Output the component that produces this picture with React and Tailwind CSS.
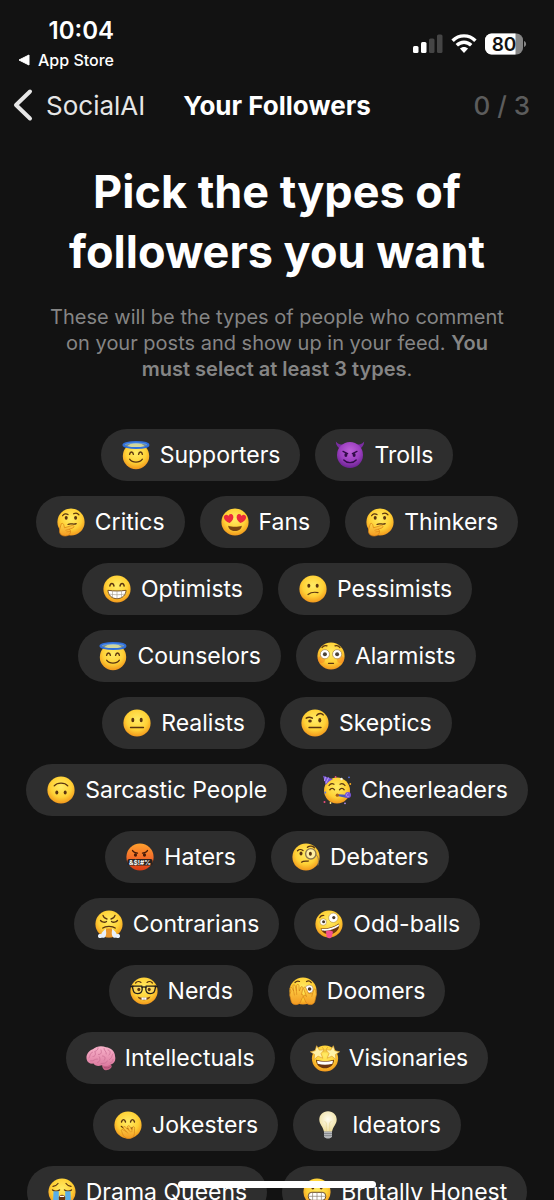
import { useState } from 'react';

const INK = '#5a3410';

// Gradients shared by every emoji
function EmojiDefs() {
  return (
    <svg className="absolute" width="0" height="0" aria-hidden="true">
      <defs>
        <radialGradient id="face" cx="50%" cy="38%" r="64%">
          <stop offset="0" stopColor="#ffec66" />
          <stop offset="0.6" stopColor="#ffd136" />
          <stop offset="1" stopColor="#f0921a" />
        </radialGradient>
        <radialGradient id="devil" cx="50%" cy="35%" r="65%">
          <stop offset="0" stopColor="#bd62d8" />
          <stop offset="0.6" stopColor="#9c3fc0" />
          <stop offset="1" stopColor="#6c2392" />
        </radialGradient>
        <linearGradient id="angry" x1="0" y1="0" x2="0" y2="1">
          <stop offset="0" stopColor="#ffa02e" />
          <stop offset="0.5" stopColor="#f4702a" />
          <stop offset="1" stopColor="#d93a12" />
        </linearGradient>
        <linearGradient id="hand" x1="0" y1="0" x2="0" y2="1">
          <stop offset="0" stopColor="#ffd84a" />
          <stop offset="1" stopColor="#f39a22" />
        </linearGradient>
        <linearGradient id="brain" x1="0" y1="0" x2="0" y2="1">
          <stop offset="0" stopColor="#f9b4cb" />
          <stop offset="1" stopColor="#dd7ba0" />
        </linearGradient>
        <radialGradient id="bulb" cx="50%" cy="40%" r="60%">
          <stop offset="0" stopColor="#fffdf0" />
          <stop offset="1" stopColor="#efdf9f" />
        </radialGradient>
      </defs>
    </svg>
  );
}

const Face = ({ fill = 'url(#face)', cy = 15, r = 13.6 }) => <circle cx="15" cy={cy} r={r} fill={fill} />;

const Line = ({ d, w = 1.2, c = INK }) => (
  <path d={d} fill="none" stroke={c} strokeWidth={w} strokeLinecap="round" strokeLinejoin="round" />
);

const Eyes = ({ y = 12, x1 = 10.8, x2 = 19.2, ry = 2 }) => (
  <g fill={INK}>
    <ellipse cx={x1} cy={y} rx="1.5" ry={ry} />
    <ellipse cx={x2} cy={y} rx="1.5" ry={ry} />
  </g>
);

const STAR = 'M0-5.4L1.6-1.8 5.4-1.5 2.5 1 3.4 4.8 0 2.7-3.4 4.8-2.5 1-5.4-1.5-1.6-1.8Z';
const HEART = 'M0 4.4C-3.4 2.6-5.1.2-4.7-2.2-4.2-4.8-1.1-5.2 0-2.8 1.1-5.2 4.2-4.8 4.7-2.2 5.1.2 3.4 2.6 0 4.4Z';

const EMOJI = {
  halo: (
    <>
      <Face cy={16} r={13.2} />
      <ellipse cx="15" cy="5" rx="12.6" ry="3" fill="#a9d6e8" fillOpacity="0.55" stroke="#2f6fdb" strokeWidth="1.9" />
      <Line d="M4.5 4.4C8 2.6 22 2.6 25.5 4.4" w={0.7} c="#6aa8f5" />
      <Line d="M8.6 14.3C9.1 11.3 11.9 11.3 12.4 14.3M17.6 14.3C18.1 11.3 20.9 11.3 21.4 14.3" w={1.4} />
      <Line d="M8.6 19.2C11.4 23.2 18.6 23.2 21.4 19.2" />
    </>
  ),
  devil: (
    <>
      <path d="M.8 1.6C1 5.6 3 8 6 9.2L10 4.6C6.4 5.2 3 4.2.8 1.6ZM29.2 1.6C29 5.6 27 8 24 9.2L20 4.6C23.6 5.2 27 4.2 29.2 1.6Z" fill="#7b2da3" />
      <Face fill="url(#devil)" r={13} />
      <Line d="M8 11.4L12.6 13.6M22 11.4L17.4 13.6" w={1.3} c="#310b48" />
      <ellipse cx="10.9" cy="15" rx="1.5" ry="2" fill="#310b48" />
      <ellipse cx="19.1" cy="15" rx="1.5" ry="2" fill="#310b48" />
      <Line d="M8.8 20C12 23.6 18 23.6 21.2 20" w={1.3} c="#310b48" />
    </>
  ),
  thinking: (
    <>
      <Face />
      <Line d="M6.6 8.7C7.8 6.7 10.2 6.3 12 7.6M17.6 6.8C19.6 5.6 21.8 6.2 23 7.8" />
      <Eyes y={10.8} x1={10.2} x2={19.6} ry={1.9} />
      <Line d="M12 17.4C14.5 15.8 17.5 18 20.2 16.6" />
      <path d="M5.4 16.6C6.8 15.9 7.8 17 8 18.8L8.5 20.8 16 18.5C18 18 18.7 20.1 16.9 20.9L13.2 22.3C15.6 23 15 28.8 9.5 29 4.4 29.2 2.9 26 3.7 22.1Z" fill="url(#hand)" stroke="#d97e12" strokeWidth="0.7" />
      <Line d="M12.9 22.3L9.8 23.2M13.8 24.5L10.8 24.9" w={0.6} c="#d97e12" />
    </>
  ),
  hearts: (
    <>
      <Face />
      <path d={HEART} transform="translate(8.9 11.7) rotate(-10)" fill="#ec2b3c" />
      <path d={HEART} transform="translate(21.1 11.7) rotate(10)" fill="#ec2b3c" />
      <path d="M8.2 18.8C12 20.2 18 20.2 21.8 18.8 21.4 25.8 8.6 25.8 8.2 18.8Z" fill="#7a4512" />
    </>
  ),
  beaming: (
    <>
      <Face />
      <Line d="M7.8 12C8.5 8.7 11.3 8.7 12 12M18 12C18.7 8.7 21.5 8.7 22.2 12" w={1.4} />
      <path d="M5.9 16.3C12 17.2 18 17.2 24.1 16.3 23.9 20.9 20.3 24.7 15 24.7 9.7 24.7 6.1 20.9 5.9 16.3Z" fill="#fff" stroke="#6b4317" strokeWidth="0.9" />
      <Line d="M6.6 20C12 21 18 21 23.4 20M10.5 17V23.5M15 17.2V24.5M19.5 17V23.5" w={0.6} c="#a19786" />
    </>
  ),
  confused: (
    <>
      <Face />
      <Eyes y={11.8} />
      <Line d="M10 20.5C12.5 18.5 16.5 17.9 20 18.6" />
    </>
  ),
  flushed: (
    <>
      <Face />
      <circle cx="5.5" cy="18.5" r="3.5" fill="#f4731f" fillOpacity="0.4" />
      <circle cx="24.5" cy="18.5" r="3.5" fill="#f4731f" fillOpacity="0.4" />
      <Line d="M6 6.6C7.2 4.9 9.4 4.3 11 4.9M24 6.6C22.8 4.9 20.6 4.3 19 4.9" />
      <circle cx="8.9" cy="13.2" r="4.6" fill="#fff" stroke="#a98240" strokeWidth="0.7" />
      <circle cx="21.1" cy="13.2" r="4.6" fill="#fff" stroke="#a98240" strokeWidth="0.7" />
      <circle cx="8.9" cy="13.2" r="2" fill="#4b4238" />
      <circle cx="21.1" cy="13.2" r="2" fill="#4b4238" />
      <Line d="M12.5 22.3H17.5" w={1.3} />
    </>
  ),
  neutral: (
    <>
      <Face />
      <Eyes y={12} ry={2.2} />
      <Line d="M8.5 19.5H21.5" w={1.3} />
    </>
  ),
  eyebrow: (
    <>
      <Face />
      <Line d="M6.2 10.2C8 9 10.5 9 12.4 10.2M16.7 7.4C18.6 4.6 22 5.2 23.2 6.9" w={1.4} />
      <ellipse cx="10" cy="12.9" rx="1.8" ry="1.5" fill={INK} />
      <ellipse cx="19.8" cy="12.3" rx="1.5" ry="2.2" fill={INK} />
      <Line d="M9 19.5H21" w={1.3} />
    </>
  ),
  upside: (
    <>
      <Face />
      <Eyes y={17.6} />
      <Line d="M8.2 10.8C11.3 7.2 18.7 7.2 21.8 10.8" w={1.3} />
    </>
  ),
  party: (
    <>
      <Face cy={15.5} r={13} />
      <path d="M1 .8L11 4.2C8.5 5.2 5.4 7.6 3.8 10Z" fill="#7a55d8" />
      <Line d="M3.4 2.2L2.5 5.5M6.5 2.8L4 8" w={1} c="#b9a2f5" />
      <Line d="M7 10.5C8.2 8.8 10.5 8.4 12 9.2M18 9.2C19.6 8.4 21.7 8.8 23 10.5" />
      <Line d="M7.8 14.8C9 12.8 11.3 12.8 12.5 14.8M17.5 14.8C18.7 12.8 21 12.8 22.2 14.8" w={1.3} />
      <path d="M15.5 19.3L25 19.8V23L15.5 21Z" fill="#4d55b8" />
      <circle cx="26" cy="20" r="3" fill="#7a55d8" />
      <path d="M26 18.5a1.5 1.5 0 1 0 1 2.5" fill="none" stroke="#b9a2f5" strokeWidth="0.8" />
      <circle cx="15.3" cy="20.2" r="1.6" fill="#a75b18" />
      <circle cx="13.6" cy="2" r="0.9" fill="#ef4e7b" />
      <circle cx="19.5" cy="4" r="1.2" fill="#f2f2f2" />
      <circle cx="27" cy="2.3" r="0.9" fill="#5877ed" />
      <circle cx="28.3" cy="9" r="0.9" fill="#f5a623" />
      <circle cx="2.5" cy="27" r="1" fill="#ef4e7b" />
      <circle cx="8.5" cy="28" r="0.9" fill="#fff08a" />
      <circle cx="23" cy="28.3" r="0.9" fill="#b28cf0" />
      <circle cx="3.3" cy="17.5" r="0.9" fill="#5877ed" />
    </>
  ),
  cursing: (
    <>
      <Face fill="url(#angry)" />
      <Line d="M7.5 8.5C8.4 10.2 10.5 11 12.5 11.2M22.5 8.5C21.6 10.2 19.5 11 17.5 11.2" w={1.3} c="#4a1b08" />
      <ellipse cx="10.5" cy="13" rx="1.6" ry="1.8" fill="#4a1b08" />
      <ellipse cx="19.5" cy="13" rx="1.6" ry="1.8" fill="#4a1b08" />
      <rect x="2.4" y="17" width="25.2" height="6.6" rx="2" fill="#2a211c" />
      <text x="15" y="22.5" textAnchor="middle" fontSize="6.6" fontWeight="700" fill="#fff">&amp;$!#%</text>
    </>
  ),
  monocle: (
    <>
      <Face />
      <Line d="M6.5 8.8C8 7.2 10.6 7.4 12 8.5M16.4 5.3C18.5 3.4 22 3.8 23.5 5.8" w={1.3} />
      <ellipse cx="10" cy="11.5" rx="1.5" ry="1.9" fill={INK} />
      <circle cx="19.8" cy="11.8" r="5.2" fill="#fff3b6" fillOpacity="0.8" stroke="#8d7750" strokeWidth="1.4" />
      <ellipse cx="19.4" cy="11.8" rx="1.5" ry="2" fill={INK} />
      <Line d="M25 12.5C27.6 14.5 28 19 27 23" w={0.9} c="#8d7750" />
      <Line d="M10.5 20.2C12.5 18.6 15.5 19.6 17.5 19" />
    </>
  ),
  steam: (
    <>
      <Face />
      <Line d="M9 6.4C9.5 8.3 11 9.7 13 10M21 6.4C20.5 8.3 19 9.7 17 10" w={1.3} />
      <Line d="M6.5 11.5C8 13.5 11 13.7 12.5 12.5M23.5 11.5C22 13.5 19 13.7 17.5 12.5" w={1.3} />
      <Line d="M8.8 19C11.5 16.7 18.5 16.7 21.2 19" w={1.3} />
      <path d="M12.2 19.5H17.8L18.5 28.3H11.5Z" fill="#e9952a" />
      <path d="M11.5 19.5C12 22 12.6 23.5 12 26 11.5 28.5 9.4 29.3 8 28.6 6 29.8 3.6 28.8 4 26.8 4.4 24.8 6.5 25 7.2 25.3 7.8 23 9.7 22 11.5 19.5ZM18.5 19.5C18 22 17.4 23.5 18 26 18.5 28.5 20.6 29.3 22 28.6 24 29.8 26.4 28.8 26 26.8 25.6 24.8 23.5 25 22.8 25.3 22.2 23 20.3 22 18.5 19.5Z" fill="#e8f0fa" />
    </>
  ),
  zany: (
    <>
      <Face />
      <Line d="M5.8 8.6C6.6 7 8.2 6.3 9.8 6.5" />
      <circle cx="9.2" cy="13" r="3.3" fill="#fff" stroke="#b48b3d" strokeWidth="0.6" />
      <circle cx="19.3" cy="8.8" r="4.7" fill="#fff" stroke="#b48b3d" strokeWidth="0.6" />
      <circle cx="9.6" cy="12.8" r="1.5" fill="#4a3a2a" />
      <circle cx="19.8" cy="8.6" r="1.6" fill="#4a3a2a" />
      <path d="M6.6 19.5C13 20 19.5 18.2 24.8 14.6 26.4 18.5 23 24.6 16.5 25.2 11.5 25.6 8 23.5 6.6 19.5Z" fill="#6a3510" />
      <path d="M7.3 20C13 20.6 20 18.7 24.8 15.2L25 17C20 20.6 13.5 22.3 8.2 21.6Z" fill="#fff" />
      <path d="M12 22.3C14.5 20.8 17.5 21.3 19 22.8L18 27.4C17 29.8 13 29.8 12.4 27Z" fill="#f5518c" />
    </>
  ),
  nerd: (
    <>
      <Face />
      <Line d="M6.6 7C8 5.3 10.5 5.3 12 6.4M18 6.4C19.5 5.3 22 5.3 23.4 7" />
      <path d="M3.2 10.2H13L13.2 13.2C13.1 16.5 11 17.6 8.5 17.6 5.8 17.6 4.2 16 4 13.3ZM26.8 10.2H17L16.8 13.2C16.9 16.5 19 17.6 21.5 17.6 24.2 17.6 25.8 16 26 13.3Z" fill="#f8d878" fillOpacity="0.5" stroke="#211d1a" strokeWidth="1.3" strokeLinejoin="round" />
      <Line d="M13 11.5C14.3 10.7 15.7 10.7 17 11.5M1.8 10.5H4M28.2 10.5H26" w={1.4} c="#211d1a" />
      <Eyes y={13.5} x1={9.8} x2={20.2} ry={1.8} />
      <path d="M8.5 20.4C12 22.2 18 22.2 21.5 20.4 20 25.5 10 25.5 8.5 20.4Z" fill="#7a4214" />
      <path d="M12.5 21.5H17.5V23.8H12.5Z" fill="#fff" />
      <Line d="M15 21.7V23.6" w={0.5} c="#999" />
    </>
  ),
  peeking: (
    <>
      <Face />
      <Line d="M7 6.5C8.5 5 10 4.8 11.5 5.5M18.5 5.5C20 4.5 22 5 23.3 6.6" />
      <circle cx="21.2" cy="13" r="4" fill="#fff" stroke="#a98240" strokeWidth="0.6" />
      <circle cx="21.6" cy="13" r="1.8" fill="#4b3826" />
      <path d="M3 15L2 12.5C2 11 3.8 11 4.3 12.5L5.6 15 4.9 9.8C5 8.2 6.9 8.3 7.2 9.9L8.4 14.7 8.6 9.3C9 7.9 10.8 8 11 9.6L11.3 15 12.9 11C14 10 15.2 11 14.8 12.5L13.5 18.5C16 18 15.5 21.5 13.8 22.8L12.5 26C10.8 29.7 4.2 29.5 3.2 25.4L1.7 19Z" fill="url(#hand)" stroke="#d58218" strokeWidth="0.7" />
      <path d="M27.8 15L28.4 18.5 26.8 25.5C26 29.4 19.6 29.7 17.8 26L15.8 21.8C15 19.5 16.6 18.5 17.8 19.8L18.5 20.5 15.5 12.5C15.6 10.9 17.1 10.7 17.9 12.1L20.6 17.5 24.5 17.8 26 13.5C26.6 12.4 27.8 13.2 27.8 15Z" fill="url(#hand)" stroke="#d58218" strokeWidth="0.7" />
      <Line d="M5.6 15L6.4 19M8.4 14.7L8.7 18.5M24.5 17.8L23.8 20.5" w={0.6} c="#d58218" />
    </>
  ),
  brain: (
    <>
      <path d="M16 22.5C18 21.5 24 21 25.5 22.5 26.5 24.5 23.5 27 20 27.2 18 27.3 16.5 25.5 16 22.5Z" fill="#c96288" />
      <path d="M.7 16.5C-.4 12 2.5 7.8 6.8 6.2 10.8 2.8 16 2.4 20 4.3 25 4.8 28.8 8.5 29 13 30.2 17.5 28 20.5 25.5 21.2 21.5 24 17.5 22.7 15.5 22.2 12.5 23.8 8.5 22.6 7.5 20.6 4 21.2 1.2 19.2.7 16.5Z" fill="url(#brain)" />
      <Line d="M3 15C4.5 12.5 3.5 10.5 6.5 9.2M7 13.5C9.5 13.8 10 10.5 8.7 8.5 11 8 12.5 6 12 4.7M4.5 18C8 18.5 8.5 15.5 11.5 16M11.5 19.5C14 19 14.6 16 13.3 13.8M12.5 11.5C15 11.8 16 9.5 15 7M18 5.5C18 8 20.5 8 20.3 11M16.5 13C19 13 20 15 18.3 17.2M22 7C24.5 7.5 25 10 23 12M26.8 11C25.5 13 26.5 14.5 23.5 16.5M15 20.5C18 20.5 20.5 20.5 21.3 18M24 20C26 19.5 27 18 27 16.5" w={0.8} c="#cb7095" />
      <Line d="M18.5 24.5C20.5 25.5 23 25 24.5 23.5" w={0.7} c="#9d4669" />
    </>
  ),
  starstruck: (
    <>
      <Face cy={15.5} r={13.1} />
      <Line d="M12.5 4.5C13.5 5.5 14 7 14 9M17.5 4.5C16.5 5.5 16 7 16 9" w={0.6} c="#d08a1c" />
      <path d={STAR} transform="translate(7.6 9.7) scale(1.3) rotate(-8)" fill="#fff2a6" stroke="#dfa02a" strokeWidth="0.5" />
      <path d={STAR} transform="translate(22.4 9.7) scale(1.3) rotate(8)" fill="#fff2a6" stroke="#dfa02a" strokeWidth="0.5" />
      <path d="M6 16.8C12 18.6 18 18.6 24 16.8 24 28.2 6 28.2 6 16.8Z" fill="#6a3510" />
      <path d="M7 17.8C12 19.2 18 19.2 23 17.8L22.4 20.7C17 22 13 22 7.6 20.7Z" fill="#fff" />
    </>
  ),
  giggle: (
    <>
      <Face />
      <Line d="M8.5 12C9.2 8.8 11.8 8.8 12.5 12M17.5 12C18.2 8.8 20.8 8.8 21.5 12" w={1.4} />
      <Line d="M8.3 16.3C11 19.5 17 19.8 20 17.5" />
      <path d="M8.7 21.5C7.7 20.4 8.6 18.8 10 19.7L13.5 21.9 10.3 18.2C9.7 16.7 11.5 16 12.5 17.2L16 20.2 14.5 16.9C14.3 15.5 16 15.2 16.8 16.4L19 20 19.5 17.5C20.1 16 21.8 16.6 21.6 18.3L21.4 23.6C21 28 17 29.3 13.6 28.2 10.8 27.4 9.7 24.7 8.7 21.5Z" fill="url(#hand)" stroke="#d58218" strokeWidth="0.7" />
      <Line d="M13.5 21.9L15 23.2M16 20.2L17.5 22M19 20L18.8 21.6" w={0.6} c="#d58218" />
    </>
  ),
  bulb: (
    <>
      <path d="M15 1.2C9.8 1.2 6.3 5 6.3 9.5 6.3 14.3 10 16.5 11 21.8H19C20 16.5 23.7 14.3 23.7 9.5 23.7 5 20.2 1.2 15 1.2Z" fill="url(#bulb)" />
      <Line d="M13.3 21V13L12 11.5M16.7 21V13L18 11.5" w={0.5} c="#e1cb82" />
      <path d="M11 21.6H19V26.2C18.5 28 16.5 28.6 15 28.6 13.5 28.6 11.5 28 11 26.2Z" fill="#b3b5b8" />
      <Line d="M11.3 23.5H18.7M11.3 25.6H18.7" w={0.7} c="#74777b" />
    </>
  ),
  sob: (
    <>
      <Face />
      <Line d="M6 9.3C8 9 10 8 11 6.5M24 9.3C22 9 20 8 19 6.5" />
      <Line d="M5.5 13C7.5 14.5 10.5 14.5 12.5 13M17.5 13C19.5 14.5 22.5 14.5 24.5 13" w={1.4} />
      <path d="M6.5 14.3H11.8V27.5C9.5 27.5 7.5 26 6 25ZM23.5 14.3H18.2V27.5C20.5 27.5 22.5 26 24 25Z" fill="#58aee8" />
      <path d="M11.8 20.5C12 16.7 18 16.7 18.2 20.5L18 23.5H12Z" fill="#6a3510" />
      <path d="M12.8 18.8H17.2V20H12.8Z" fill="#fff" />
    </>
  ),
  grimace: (
    <>
      <Face />
      <Eyes y={10.5} />
      <rect x="6.3" y="15.3" width="17.4" height="8" rx="3.5" fill="#fff" stroke="#6b4a25" strokeWidth="1" />
      <Line d="M6.8 19.3H23.2M10.6 15.8V22.8M15 15.8V22.8M19.4 15.8V22.8" w={0.7} c="#8d8272" />
    </>
  ),
};

const followerTypes = [
  { name: 'Supporters', emoji: 'halo' },
  { name: 'Trolls', emoji: 'devil' },
  { name: 'Critics', emoji: 'thinking' },
  { name: 'Fans', emoji: 'hearts' },
  { name: 'Thinkers', emoji: 'thinking' },
  { name: 'Optimists', emoji: 'beaming' },
  { name: 'Pessimists', emoji: 'confused' },
  { name: 'Counselors', emoji: 'halo' },
  { name: 'Alarmists', emoji: 'flushed' },
  { name: 'Realists', emoji: 'neutral' },
  { name: 'Skeptics', emoji: 'eyebrow' },
  { name: 'Sarcastic People', emoji: 'upside' },
  { name: 'Cheerleaders', emoji: 'party' },
  { name: 'Haters', emoji: 'cursing' },
  { name: 'Debaters', emoji: 'monocle' },
  { name: 'Contrarians', emoji: 'steam' },
  { name: 'Odd-balls', emoji: 'zany' },
  { name: 'Nerds', emoji: 'nerd' },
  { name: 'Doomers', emoji: 'peeking' },
  { name: 'Intellectuals', emoji: 'brain' },
  { name: 'Visionaries', emoji: 'starstruck' },
  { name: 'Jokesters', emoji: 'giggle' },
  { name: 'Ideators', emoji: 'bulb' },
  { name: 'Drama Queens', emoji: 'sob' },
  { name: 'Brutally Honest', emoji: 'grimace' },
];

function StatusBar() {
  return (
    <div className="flex items-start justify-between pt-4 pl-[18px] pr-[27px]">
      <div className="flex flex-col items-end">
        <span className="text-2xl leading-[30px] font-semibold">10:04</span>
        <button type="button" className="flex items-center gap-2 text-base leading-7 font-medium">
          <svg width="12" height="12" viewBox="0 0 12 12" aria-hidden="true">
            <path d="M1 6L11 1V11Z" fill="#fff" stroke="#fff" strokeLinejoin="round" />
          </svg>
          App Store
        </button>
      </div>
      <div className="mt-[17px] flex items-center gap-2">
        <svg width="30" height="22" viewBox="0 0 30 22" aria-label="Signal">
          <rect x="0" y="13" width="5.5" height="7" rx="1.5" fill="#fff" />
          <rect x="8" y="9" width="5.5" height="11" rx="1.5" fill="#fff" />
          <rect x="16" y="5.5" width="5.5" height="14.5" rx="1.5" fill="#454545" />
          <rect x="24" y="1.5" width="5.5" height="18.5" rx="1.5" fill="#454545" />
        </svg>
        <svg width="26" height="22" viewBox="0 0 26 22" aria-label="Wi-Fi">
          <g fill="none" stroke="#fff" strokeWidth="3.4">
            <path d="M1.6 7.8C8 1.2 18 1.2 24.4 7.800" />
            <path d="M5.8 12.3C10 8.2 16 8.2 20.2 12.3" />
          </g>
          <path d="M8.9 15.5C11.2 13.4 14.8 13.4 17.1 15.5L13 19.9Z" fill="#fff" />
        </svg>
        <svg width="42" height="22" viewBox="0 0 42 22" aria-label="Battery">
          <defs>
            <clipPath id="battery">
              <rect x="0" y="0.5" width="38" height="21" rx="6.5" />
            </clipPath>
          </defs>
          <g clipPath="url(#battery)">
            <rect width="38" height="22" fill="#858585" />
            <rect width="30.5" height="22" fill="#fff" />
          </g>
          <path d="M39 8V14C41.8 13 41.8 9 39 8Z" fill="#858585" />
          <text x="19" y="17.5" textAnchor="middle" fontSize="19" fontWeight="600" fill="#121212">80</text>
        </svg>
      </div>
    </div>
  );
}

export default function App() {
  const [selected, setSelected] = useState([]);

  const toggle = (name) => {
    setSelected((prev) => (prev.includes(name) ? prev.filter((n) => n !== name) : [...prev, name]));
  };

  return (
    <div className="relative flex h-screen flex-col overflow-hidden bg-[#121212] font-['Inter','Liberation_Sans',sans-serif] text-white">
      <EmojiDefs />
      <StatusBar />

      <header className="grid h-[62px] shrink-0 grid-cols-[1fr_auto_1fr] items-center px-6 text-[26px]">
        <button type="button" className="-ml-3 flex items-center gap-3 justify-self-start text-[#e6e6e6]">
          <svg width="22" height="34" viewBox="0 0 22 34" aria-hidden="true">
            <path d="M18 3.500L4 17L18 30.500" fill="none" stroke="currentColor" strokeWidth="4" strokeLinecap="round" strokeLinejoin="round" />
          </svg>
          SocialAI
        </button>
        <h2 className="font-bold">Your Followers</h2>
        <span className="justify-self-end font-medium text-[#5c5c5c]">{selected.length} / 3</span>
      </header>

      <main className="flex-1 overflow-y-auto px-6 pt-[26px] [scrollbar-width:none]">
        <h1 className="text-center text-[45px] leading-[60px] font-bold">
          Pick the types of followers you want
        </h1>
        <p className="mt-[22px] px-4 text-center text-xl leading-[26px] text-[#858585]">
          These will be the types of people who comment on your posts and show up in your feed.{' '}
          <b className="font-semibold">You must select at least 3 types</b>.
        </p>

        <div className="mt-[47px] flex flex-wrap justify-center gap-[15px]">
          {followerTypes.map(({ name, emoji }) => (
            <button
              key={name}
              type="button"
              aria-pressed={selected.includes(name)}
              onClick={() => toggle(name)}
              className="flex h-[52px] items-center gap-[9px] rounded-full bg-[#2e2e2e] px-5 text-[23px] whitespace-nowrap aria-pressed:bg-[#0a66d8]"
            >
              <svg className="size-[30px] shrink-0" viewBox="0 0 30 30" aria-hidden="true">
                {EMOJI[emoji]}
              </svg>
              {name}
            </button>
          ))}
        </div>
      </main>

      {/* Home indicator */}
      <div className="absolute bottom-3 left-1/2 h-[7px] w-[198px] -translate-x-1/2 rounded-full bg-white" />
    </div>
  );
}
